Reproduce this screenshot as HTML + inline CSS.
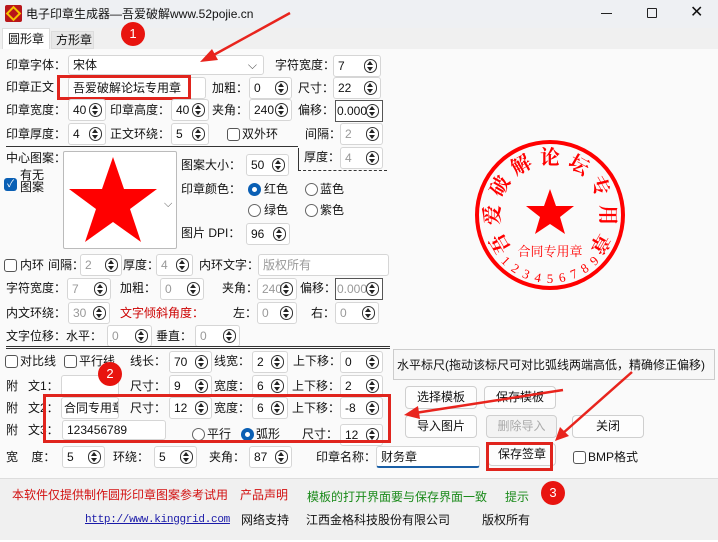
<!DOCTYPE html><html><head><meta charset="utf-8"><style>
*{margin:0;padding:0;box-sizing:border-box}
body{width:718px;height:542px;overflow:hidden;background:#fff;font-family:"Liberation Sans","Noto Sans CJK SC",sans-serif;font-size:12px;color:#111;position:relative}
div,span{position:absolute}
.l{line-height:18px;white-space:nowrap}
.sp{height:22px;background:#fff;border:1px solid #d6d6d6;border-radius:3px;padding-left:4px;line-height:20px;font-size:12px;color:#111}
.sp.g{color:#999}
.sp.d{border:1px solid #555;border-radius:0}
.sp i{position:absolute;right:3px;top:3px;width:13px;height:14px;border:1px solid #333;border-radius:7px}
.sp i:before{content:"";position:absolute;left:2px;top:1px;border-left:3.5px solid transparent;border-right:3.5px solid transparent;border-bottom:4px solid #222}
.sp i:after{content:"";position:absolute;left:2px;top:7px;border-left:3.5px solid transparent;border-right:3.5px solid transparent;border-top:4px solid #222}
.in{height:22px;background:#fff;border:1px solid #d6d6d6;border-radius:3px;padding-left:4px;line-height:20px;white-space:nowrap;overflow:hidden}
.cb{width:13px;height:13px;border:1px solid #555;border-radius:3px;background:#fff}
.rb{width:13px;height:13px;border:1px solid #666;border-radius:50%;background:#fff}
.rb.on{border:4px solid #0a5fb4}
.bt{height:23px;background:#fdfdfd;border:1px solid #cfcfcf;border-radius:4px;text-align:center;line-height:21px}
.rc{width:24px;height:24px;border-radius:50%;background:#e8140f;color:#fff;text-align:center;line-height:24px;font-size:13px}
.rbox{border:3px solid #e0241d}
</style></head><body>
<!-- title -->
<div style="left:0;top:0;width:718px;height:28px;background:#eef0f3"></div>
<div style="left:5px;top:5px;width:17px;height:17px;background:#b8161a;border-radius:2px"><div style="left:3px;top:3px;width:11px;height:11px;border:2px solid #f5c400;transform:rotate(45deg)"></div></div>
<div class="l" style="left:26px;top:5px;font-size:12px">电子印章生成器—吾爱破解www.52pojie.cn</div>
<div style="left:601px;top:13px;width:11px;border-top:1px solid #222"></div>
<div style="left:647px;top:8px;width:10px;height:10px;border:1px solid #222;border-radius:1px"></div>
<div class="l" style="left:690px;top:4px;font-size:16px">✕</div>
<div style="left:0;top:28px;width:718px;height:21px;background:#f0f0f0"></div>
<div style="left:2px;top:28px;width:48px;height:22px;background:#fff;border:1px solid #ddd;border-bottom:none"></div>
<div class="l" style="left:8px;top:30px">圆形章</div>
<div style="left:51px;top:31px;width:43px;height:18px;background:#e8e8e8;border:1px solid #ddd"></div>
<div class="l" style="left:56px;top:31px">方形章</div>
<div style="left:0;top:49px;width:718px;height:429px;background:#fafafa"></div>

<!-- row1 -->
<div class="l" style="left:6px;top:56px">印章字体：</div>
<div class="in" style="left:68px;top:55px;width:196px;height:20px;line-height:18px">宋体<span style="right:6px;top:0;color:#555">⌵</span></div>
<div class="l" style="left:275px;top:56px">字符宽度：</div>
<div class="sp" style="left:333px;top:55px;width:48px">7<i></i></div>
<!-- row2 -->
<div class="l" style="left:6px;top:78px">印章正文</div>
<div class="in" style="left:68px;top:77px;width:138px">吾爱破解论坛专用章</div>
<div class="rbox" style="left:57px;top:75px;width:134px;height:25px"></div>
<div class="l" style="left:212px;top:79px">加粗：</div>
<div class="sp" style="left:249px;top:77px;width:43px">0<i></i></div>
<div class="l" style="left:298px;top:79px">尺寸：</div>
<div class="sp" style="left:333px;top:77px;width:48px">22<i></i></div>
<!-- row3 -->
<div class="l" style="left:6px;top:101px">印章宽度：</div>
<div class="sp" style="left:68px;top:99px;width:38px">40<i></i></div>
<div class="l" style="left:110px;top:101px">印章高度：</div>
<div class="sp" style="left:171px;top:99px;width:38px">40<i></i></div>
<div class="l" style="left:212px;top:101px">夹角：</div>
<div class="sp" style="left:249px;top:99px;width:43px">240<i></i></div>
<div class="l" style="left:298px;top:101px">偏移：</div>
<div class="sp d" style="left:335px;top:100px;width:48px;padding-left:1px">0.000<i></i></div>
<!-- row4 -->
<div class="l" style="left:6px;top:125px">印章厚度：</div>
<div class="sp" style="left:68px;top:123px;width:38px">4<i></i></div>
<div class="l" style="left:110px;top:125px">正文环绕：</div>
<div class="sp" style="left:171px;top:123px;width:38px">5<i></i></div>
<div class="cb" style="left:227px;top:128px"></div>
<div class="l" style="left:242px;top:125px">双外环</div>
<div class="l" style="left:305px;top:125px">间隔：</div>
<div class="sp g" style="left:340px;top:123px;width:43px">2<i></i></div>
<div style="left:6px;top:146px;width:292px;border-top:1px solid #333"></div>
<div class="l" style="left:304px;top:148px">厚度：</div>
<div class="sp g" style="left:340px;top:147px;width:43px">4<i></i></div>
<div style="left:298px;top:170px;width:89px;border-top:1px dashed #333"></div>
<div style="left:298px;top:148px;height:22px;border-left:1px solid #333"></div>

<!-- center pattern -->
<div class="l" style="left:6px;top:149px">中心图案：</div>
<div style="left:4px;top:178px;width:13px;height:13px;background:#0a5fb4;border-radius:3px;color:#fff;font-size:10px;line-height:13px;text-align:center">✓</div>
<div class="l" style="left:20px;top:168px;line-height:14px">有无</div>
<div class="l" style="left:20px;top:180px;line-height:14px">图案</div>
<div style="left:63px;top:151px;width:114px;height:98px;background:#fff;border:1px solid #bbb;border-radius:2px">
<svg width="112" height="96" style="position:absolute;left:0;top:0"><polygon fill="#f00" points="49,5 60,37 93,37 66,57 77,90 49,70 21,90 32,57 5,37 38,37"/><text x="100" y="55" font-size="11" fill="#555">⌵</text></svg></div>
<div class="l" style="left:181px;top:156px">图案大小：</div>
<div class="sp" style="left:246px;top:154px;width:43px">50<i></i></div>
<div class="l" style="left:181px;top:180px">印章颜色：</div>
<div class="rb on" style="left:248px;top:183px"></div><div class="l" style="left:264px;top:180px">红色</div>
<div class="rb" style="left:305px;top:183px"></div><div class="l" style="left:320px;top:180px">蓝色</div>
<div class="rb" style="left:248px;top:204px"></div><div class="l" style="left:264px;top:201px">绿色</div>
<div class="rb" style="left:305px;top:204px"></div><div class="l" style="left:320px;top:201px">紫色</div>
<div class="l" style="left:181px;top:224px">图片 DPI：</div>
<div class="sp" style="left:246px;top:223px;width:44px">96<i></i></div>

<!-- inner ring -->
<div class="cb" style="left:4px;top:259px"></div><div class="l" style="left:20px;top:256px">内环</div>
<div class="l" style="left:48px;top:256px">间隔：</div>
<div class="sp g" style="left:80px;top:254px;width:42px">2<i></i></div>
<div class="l" style="left:123px;top:256px">厚度：</div>
<div class="sp g" style="left:156px;top:254px;width:37px">4<i></i></div>
<div class="l" style="left:199px;top:256px">内环文字：</div>
<div class="in" style="left:258px;top:254px;width:131px;color:#999">版权所有</div>
<div class="l" style="left:6px;top:279px">字符宽度：</div>
<div class="sp g" style="left:67px;top:278px;width:44px">7<i></i></div>
<div class="l" style="left:120px;top:279px">加粗：</div>
<div class="sp g" style="left:160px;top:278px;width:44px">0<i></i></div>
<div class="l" style="left:222px;top:279px">夹角：</div>
<div class="sp g" style="left:257px;top:278px;width:40px">240<i></i></div>
<div class="l" style="left:300px;top:279px">偏移：</div>
<div class="sp d g" style="left:335px;top:278px;width:48px;padding-left:1px">0.000<i></i></div>
<div class="l" style="left:6px;top:304px">内文环绕：</div>
<div class="sp g" style="left:68px;top:302px;width:42px">30<i></i></div>
<div class="l" style="left:120px;top:304px;color:#c00">文字倾斜角度：</div>
<div class="l" style="left:233px;top:304px">左：</div>
<div class="sp g" style="left:257px;top:302px;width:40px">0<i></i></div>
<div class="l" style="left:311px;top:304px">右：</div>
<div class="sp g" style="left:335px;top:302px;width:44px">0<i></i></div>
<div class="l" style="left:6px;top:327px">文字位移：水平：</div>
<div class="sp g" style="left:107px;top:325px;width:45px">0<i></i></div>
<div class="l" style="left:156px;top:327px">垂直：</div>
<div class="sp g" style="left:195px;top:325px;width:45px">0<i></i></div>
<div style="left:6px;top:346px;width:384px;height:3px;border-top:1px solid #333;border-bottom:1px solid #333"></div>

<!-- lines -->
<div class="cb" style="left:5px;top:355px"></div><div class="l" style="left:20px;top:352px">对比线</div>
<div class="cb" style="left:64px;top:355px"></div><div class="l" style="left:79px;top:352px">平行线</div>
<div class="l" style="left:130px;top:352px">线长：</div>
<div class="sp" style="left:169px;top:351px;width:43px">70<i></i></div>
<div class="l" style="left:214px;top:352px">线宽：</div>
<div class="sp" style="left:252px;top:351px;width:36px">2<i></i></div>
<div class="l" style="left:293px;top:352px">上下移：</div>
<div class="sp" style="left:340px;top:351px;width:43px">0<i></i></div>
<div style="left:393px;top:349px;width:322px;height:31px;background:#f7f7f7;border:1px solid #ccc"></div>
<div class="l" style="left:397px;top:356px;font-size:12px">水平标尺(拖动该标尺可对比弧线两端高低，精确修正偏移)</div>

<div class="l" style="left:6px;top:377px">附&nbsp;&nbsp;&nbsp;文1：</div>
<div class="in" style="left:61px;top:375px;width:58px"></div>
<div class="l" style="left:130px;top:377px">尺寸：</div>
<div class="sp" style="left:169px;top:375px;width:43px">9<i></i></div>
<div class="l" style="left:214px;top:377px">宽度：</div>
<div class="sp" style="left:252px;top:375px;width:36px">6<i></i></div>
<div class="l" style="left:292px;top:377px">上下移：</div>
<div class="sp" style="left:340px;top:375px;width:43px">2<i></i></div>

<div class="l" style="left:6px;top:399px">附&nbsp;&nbsp;&nbsp;文2：</div>
<div class="in" style="left:61px;top:397px;width:58px;padding-left:2px">合同专用章</div>
<div class="l" style="left:130px;top:399px">尺寸：</div>
<div class="sp" style="left:169px;top:397px;width:43px">12<i></i></div>
<div class="l" style="left:214px;top:399px">宽度：</div>
<div class="sp" style="left:252px;top:397px;width:36px">6<i></i></div>
<div class="l" style="left:292px;top:399px">上下移：</div>
<div class="sp" style="left:340px;top:397px;width:43px">-8<i></i></div>

<div class="l" style="left:6px;top:421px">附&nbsp;&nbsp;&nbsp;文3：</div>
<div class="in" style="left:62px;top:420px;width:104px;height:20px;line-height:18px;font-size:12px">123456789</div>
<div class="rb" style="left:192px;top:428px"></div><div class="l" style="left:207px;top:425px">平行</div>
<div class="rb on" style="left:241px;top:428px"></div><div class="l" style="left:256px;top:425px">弧形</div>
<div class="l" style="left:302px;top:425px">尺寸：</div>
<div class="sp" style="left:340px;top:424px;width:43px">12<i></i></div>
<div class="rbox" style="left:43px;top:394px;width:348px;height:49px"></div>

<div class="l" style="left:6px;top:448px">宽&nbsp;&nbsp;&nbsp;&nbsp;度：</div>
<div class="sp" style="left:62px;top:446px;width:43px">5<i></i></div>
<div class="l" style="left:113px;top:448px">环绕：</div>
<div class="sp" style="left:154px;top:446px;width:43px">5<i></i></div>
<div class="l" style="left:209px;top:448px">夹角：</div>
<div class="sp" style="left:249px;top:446px;width:43px">87<i></i></div>
<div class="l" style="left:316px;top:448px">印章名称：</div>
<div class="in" style="left:376px;top:446px;width:104px;border-bottom:2px solid #1a5fa6">财务章</div>

<!-- buttons -->
<div class="bt" style="left:405px;top:386px;width:72px">选择模板</div>
<div class="bt" style="left:484px;top:386px;width:72px">保存模板</div>
<div class="bt" style="left:405px;top:415px;width:72px">导入图片</div>
<div class="bt" style="left:486px;top:415px;width:71px;color:#aaa;background:#f3f3f3">删除导入</div>
<div class="bt" style="left:572px;top:415px;width:72px">关闭</div>
<div class="bt" style="left:488px;top:443px;width:68px">保存签章</div>
<div class="rbox" style="left:486px;top:442px;width:67px;height:29px"></div>
<div class="cb" style="left:573px;top:451px"></div><div class="l" style="left:588px;top:448px;font-size:12px">BMP格式</div>

<!-- stamp -->
<svg width="718" height="542" style="position:absolute;left:0;top:0" font-family="Liberation Serif,Noto Serif CJK SC,serif">
<circle cx="550" cy="215" r="73" fill="none" stroke="#f00" stroke-width="4"/>
<polygon fill="#f00" points="550,189 556,206 574,206 560,217 565,234 550,224 535,234 540,217 526,206 544,206"/>
<g fill="#f00" font-size="20" font-weight="bold" text-anchor="middle">
<text transform="translate(550,215) rotate(-120) translate(0,-51)">吾</text>
<text transform="translate(550,215) rotate(-90) translate(0,-51)">爱</text>
<text transform="translate(550,215) rotate(-60) translate(0,-51)">破</text>
<text transform="translate(550,215) rotate(-30) translate(0,-51)">解</text>
<text transform="translate(550,215) rotate(0) translate(0,-51)">论</text>
<text transform="translate(550,215) rotate(30) translate(0,-51)">坛</text>
<text transform="translate(550,215) rotate(60) translate(0,-51)">专</text>
<text transform="translate(550,215) rotate(90) translate(0,-51)">用</text>
<text transform="translate(550,215) rotate(120) translate(0,-51)">章</text>
</g>
<text x="550" y="256" fill="#f00" font-size="13" text-anchor="middle">合同专用章</text>
<g fill="#f00" font-size="13" text-anchor="middle">
<text transform="translate(550,215) rotate(44) translate(0,68)">1</text>
<text transform="translate(550,215) rotate(33) translate(0,68)">2</text>
<text transform="translate(550,215) rotate(22) translate(0,68)">3</text>
<text transform="translate(550,215) rotate(11) translate(0,68)">4</text>
<text transform="translate(550,215) rotate(0) translate(0,68)">5</text>
<text transform="translate(550,215) rotate(-11) translate(0,68)">6</text>
<text transform="translate(550,215) rotate(-22) translate(0,68)">7</text>
<text transform="translate(550,215) rotate(-33) translate(0,68)">8</text>
<text transform="translate(550,215) rotate(-44) translate(0,68)">9</text>
</g>
<!-- arrows -->
<g stroke="#e8241d" fill="#e8241d">
<line x1="290" y1="13" x2="210" y2="57" stroke-width="2.5"/>
<polygon points="200,62 212,49 218,60" stroke="none"/>
<line x1="563" y1="390" x2="415" y2="413" stroke-width="2.5"/>
<polygon points="404,415 418,406 420,419" stroke="none"/>
<line x1="632" y1="372" x2="562" y2="434" stroke-width="2.5"/>
<polygon points="555,441 560,427 569,436" stroke="none"/>
</g>
</svg>

<div class="rc" style="left:121px;top:22px">1</div>
<div class="rc" style="left:98px;top:362px">2</div>

<!-- bottom -->
<div style="left:0;top:478px;width:718px;height:62px;background:#f0f0f0;border-top:1px solid #ddd"></div>
<div class="rc" style="left:541px;top:481px">3</div>
<div class="l" style="left:12px;top:486px;color:#d21010">本软件仅提供制作圆形印章图案参考试用</div>
<div class="l" style="left:240px;top:486px;color:#d21010">产品声明</div>
<div class="l" style="left:307px;top:488px;color:#1a8a1a">模板的打开界面要与保存界面一致</div>
<div class="l" style="left:505px;top:488px;color:#1a8a1a">提示</div>
<div class="l" style="left:85px;top:511px;color:#1a1aa8;text-decoration:underline;font-family:'Liberation Mono',monospace;font-size:11px;letter-spacing:-0.3px">http://www.kinggrid.com</div>
<div class="l" style="left:241px;top:511px">网络支持</div>
<div class="l" style="left:306px;top:511px">江西金格科技股份有限公司</div>
<div class="l" style="left:482px;top:511px">版权所有</div>
</body></html>
